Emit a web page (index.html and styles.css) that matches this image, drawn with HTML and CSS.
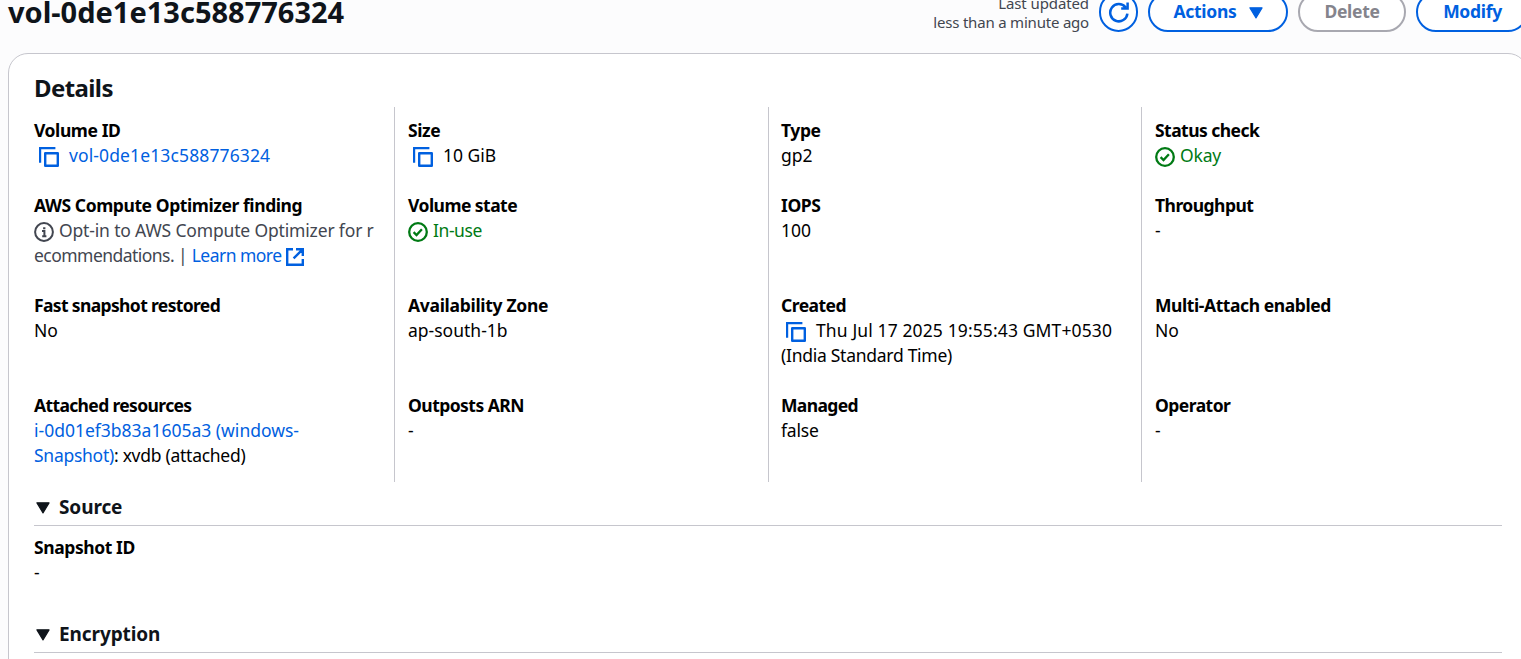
FILE: index.html
```html
<!DOCTYPE html>
<html lang="en">
<head>
<meta charset="utf-8">
<title>Volume details</title>
<link rel="stylesheet" href="styles.css">
</head>
<body>
<svg class="defs" width="0" height="0">
  <symbol id="copy" viewBox="0 0 20 20"><path d="M1 15.8V1h15.4M6.2 6.2h12.6v12.6H6.2z" fill="none" stroke="currentColor" stroke-width="2.4" stroke-linejoin="round"/></symbol>
  <symbol id="check" viewBox="0 0 20 20"><circle cx="10" cy="10" r="8.8" fill="none" stroke="currentColor" stroke-width="2.3"/><path d="M5.6 10.2l2.9 2.8 5.4-5.8" fill="none" stroke="currentColor" stroke-width="2.3"/></symbol>
  <symbol id="info" viewBox="0 0 20 20"><circle cx="10" cy="10" r="8.9" fill="none" stroke="currentColor" stroke-width="2"/><path d="M8 9h2.4v5.2M8.2 14.2h4.2M9.1 6.2h2.3" fill="none" stroke="currentColor" stroke-width="2"/></symbol>
  <symbol id="external" viewBox="0 0 18 18"><path d="M7 1.2H1.2v15.6h15.6V11M10 1.2h6.8V8M16.6 1.4L7.6 10.4" fill="none" stroke="currentColor" stroke-width="2.4"/></symbol>
  <symbol id="caret" viewBox="0 0 12 10"><path d="M.8.6h10.4L6 9.2z" fill="currentColor" stroke="currentColor" stroke-width="1" stroke-linejoin="round"/></symbol>
</svg>
<div class="page">
  <header class="header">
    <h1 class="title">vol-0de1e13c588776324</h1>
    <div class="updated"><span class="tk-1">Last updated</span><br><span class="tk-2">less than a minute ago</span></div>
    <button class="btn round"><svg width="22" height="22" viewBox="0 0 22 22"><path d="M19.4 12.6A8.6 8.6 0 1 1 17.6 6.4M19.6 1.6V7.4h-6.4" fill="none" stroke="currentColor" stroke-width="2.5"/></svg></button>
    <button class="btn actions"><span>Actions</span><svg class="caret" width="14" height="12"><use href="#caret"/></svg></button>
    <button class="btn disabled"><span>Delete</span></button>
    <button class="btn modify"><span>Modify</span></button>
  </header>
  <main class="card">
    <h2 class="heading">Details</h2>
    <div class="columns">
      <div class="column">
        <div class="item"><b class="tk-4">Volume ID</b><p><svg class="copy"><use href="#copy"/></svg><a class="tk-p1">vol-0de1e13c588776324</a></p></div>
        <div class="item"><b class="tk-4">AWS Compute Optimizer finding</b><p class="muted"><svg class="status"><use href="#info"/></svg><span class="tk-15">Opt-in to AWS Compute Optimizer for r</span><br><span class="tk-5">ecommendations. |</span> <a class="learn">Learn more</a><svg class="external"><use href="#external"/></svg></p></div>
        <div class="item"><b class="tk-6">Fast snapshot restored</b><p>No</p></div>
        <div class="item"><b class="tk-6">Attached resources</b><p><a>i-0d01ef3b83a1605a3 (windows-</a><br><span class="tk-25"><a>Snapshot)</a>: xvdb (attached)</span></p></div>
      </div>
      <div class="column">
        <div class="item"><b class="tk-4">Size</b><p><svg class="copy"><use href="#copy"/></svg><span>10 GiB</span></p></div>
        <div class="item"><b class="tk-5">Volume state</b><p class="ok"><svg class="status"><use href="#check"/></svg><span class="tk-4">In-use</span></p></div>
        <div class="item"><b class="tk-3">Availability Zone</b><p>ap-south-1b</p></div>
        <div class="item"><b class="tk-5">Outposts ARN</b><p>-</p></div>
      </div>
      <div class="column third">
        <div class="item"><b class="tk-4">Type</b><p>gp2</p></div>
        <div class="item"><b class="tk-4">IOPS</b><p>100</p></div>
        <div class="item"><b class="tk-5">Created</b><p><svg class="copy"><use href="#copy"/></svg><span class="tk-p1">Thu Jul 17 2025 19:55:43 GMT+0530</span><br><span class="tk-25">(India Standard Time)</span></p></div>
        <div class="item"><b class="tk-6">Managed</b><p><span class="tk-2">false</span></p></div>
      </div>
      <div class="column">
        <div class="item"><b class="tk-5">Status check</b><p class="ok"><svg class="status"><use href="#check"/></svg><span class="tk-15">Okay</span></p></div>
        <div class="item"><b class="tk-5">Throughput</b><p>-</p></div>
        <div class="item"><b class="tk-4">Multi-Attach enabled</b><p>No</p></div>
        <div class="item"><b class="tk-5">Operator</b><p>-</p></div>
      </div>
    </div>
    <section class="section">
      <h3><svg class="caret" width="14" height="12"><use href="#caret"/></svg><span>Source</span></h3>
      <div class="item"><b class="tk-4">Snapshot ID</b><p>-</p></div>
    </section>
    <section class="section">
      <h3><svg class="caret" width="14" height="12"><use href="#caret"/></svg><span>Encryption</span></h3>
    </section>
  </main>
</div>
</body>
</html>
```
FILE: styles.css
```css
* { box-sizing: border-box; }
html, body { height: 100%; }
body {
  margin: 0;
  overflow: hidden;
  background: #fcfcfd;
  color: #000;
  font: 400 17.5px/25px "Noto Sans", "Open Sans", sans-serif;
}
h1, h2, h3, p { margin: 0; }
b, h1, h2, h3 { font-weight: 700; }
.defs { display: block; height: 0; }

.page { width: 1521px; height: 659px; padding-left: 8px; overflow: hidden; }

.header {
  display: flex;
  align-items: center;
  gap: 10px;
  width: 1520px;
  height: 40px;
  margin-top: -8px;
}
.title {
  flex: 1;
  color: #0f141a;
  font-size: 29px;
  line-height: 40px;
}
.updated {
  padding-top: 2px;
  color: #424650;
  font-size: 15px;
  line-height: 19px;
  text-align: right;
}
.btn {
  display: flex;
  align-items: center;
  justify-content: center;
  height: 40px;
  padding: 0 0 1px;
  border: 2px solid #0060e0;
  border-radius: 20px;
  background: #fff;
  color: #0060e0;
  font: 700 17.5px/25px "Noto Sans", "Open Sans", sans-serif;
  letter-spacing: -.3px;
}
.round { width: 39px; }
.actions { width: 140px; gap: 13px; padding-left: 1px; }
.actions .caret { margin-top: 2px; }
.disabled { width: 108px; border-color: #a8a8b0; color: #84848c; }
.modify { width: 112px; padding-left: 1px; }

.card {
  width: 1520px;
  height: 640px;
  margin-top: 21px;
  padding: 19px 25px 0;
  border: 1px solid #c6c6cd;
  border-radius: 20px;
  background: #fff;
}
.heading {
  height: 34px;
  color: #0f141a;
  font-size: 24px;
  line-height: 30px;
  letter-spacing: -.6px;
}
.columns {
  display: grid;
  grid-template-columns: 360px 374px 373px 1fr;
  height: 375px;
}
.column {
  display: grid;
  grid-template-rows: 75px 100px 100px 75px;
  padding: 11px 0 14px 13px;
}
.column:first-child { padding-left: 0; }
.column.third { padding-left: 12px; }
.column + .column { border-left: 1px solid #c6c6cd; }
.item b { display: block; }
.item p { white-space: nowrap; }
.muted { color: #424650; }
.ok { color: #007a14; }
a { color: #0060e0; }

svg { flex: none; }
.copy { width: 20px; height: 20px; margin: 0 10px 0 5px; color: #0060e0; vertical-align: -5px; }
.status { width: 20px; height: 20px; margin-right: 5px; vertical-align: -5px; }
.external { width: 18px; height: 18px; margin-left: 5px; color: #0060e0; vertical-align: -4px; }
.learn { letter-spacing: -.54px; }

.section { width: 1468px; height: 127px; padding-top: 7px; }
.section h3 {
  display: flex;
  align-items: center;
  gap: 9px;
  height: 37px;
  margin-bottom: 9px;
  padding-left: 2px;
  border-bottom: 1px solid #c6c6cd;
  color: #0f141a;
  font-size: 19px;
  letter-spacing: -.1px;
}
.section .caret { margin-top: 2px; }

.tk-1 { letter-spacing: -.1px; }
.tk-15 { letter-spacing: -.16px; }
.tk-2 { letter-spacing: -.2px; }
.tk-25 { letter-spacing: -.27px; }
.tk-3 { letter-spacing: -.3px; }
.tk-4 { letter-spacing: -.42px; }
.tk-5 { letter-spacing: -.54px; }
.tk-6 { letter-spacing: -.64px; }
.tk-p1 { letter-spacing: .12px; }
```
